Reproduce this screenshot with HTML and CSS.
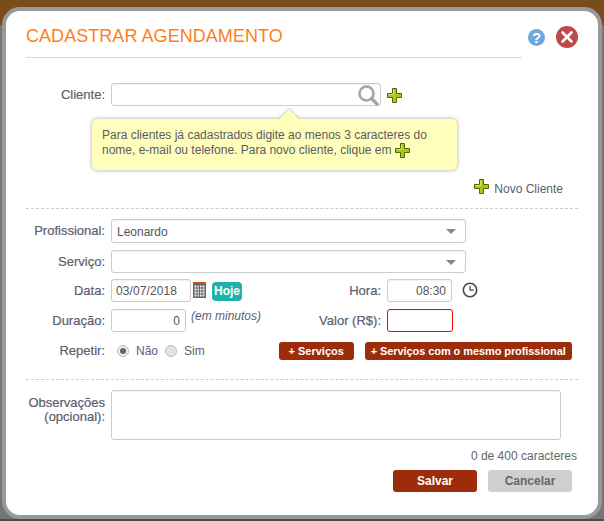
FILE: index.html
```html
<!DOCTYPE html>
<html lang="pt-BR">
<head>
<meta charset="utf-8">
<title>Cadastrar Agendamento</title>
<link rel="stylesheet" href="styles.css">
</head>
<body>
<svg class="defs" width="0" height="0" aria-hidden="true">
  <defs>
    <symbol id="plus" viewBox="0 0 15 15">
      <path d="M5.5 .5h4v5h5v4h-5v5h-4v-5h-5v-4h5z" fill="#a8c81e" stroke="#4c6a06" stroke-width="1"/>
      <path d="M6.500 2v4.500h-4.500" fill="none" stroke="#dcec70" stroke-width="1"/>
    </symbol>
  </defs>
</svg>
<main class="modal">
  <header class="head">
    <h1 class="title">CADASTRAR AGENDAMENTO</h1>
    <div class="head-icons">
      <svg class="help" width="17" height="17" viewBox="0 0 17 17"><circle cx="8.500" cy="8.500" r="8.500" fill="#6fa8dc"/><text x="8.500" y="13.500" text-anchor="middle" class="help-q">?</text></svg>
      <svg class="close" width="22" height="22" viewBox="0 0 22 22"><circle cx="11" cy="11" r="11" fill="#bd4a4a"/><path d="M6.500 6.500l9 9M15.500 6.500l-9 9" stroke="#fff" stroke-width="2.600" stroke-linecap="round"/></svg>
    </div>
  </header>

  <section class="client">
    <div class="row">
      <label class="lbl">Cliente:</label>
      <div class="field field-client">
        <svg class="search" width="23" height="22" viewBox="0 0 23 22"><circle cx="9.500" cy="9.500" r="7" fill="none" stroke="#a6a6a6" stroke-width="2.600"/><path d="M14.500 14.500l5.500 5.500" stroke="#a6a6a6" stroke-width="3.400" stroke-linecap="round"/></svg>
      </div>
      <svg class="plus plus-client" width="15" height="15"><use href="#plus"/></svg>
    </div>
    <div class="tip">
      Para clientes já cadastrados digite ao menos 3 caracteres do<br>
      nome, e-mail ou telefone. Para novo cliente, clique em <svg class="plus plus-inline" width="15" height="15"><use href="#plus"/></svg>
    </div>
    <div class="new-client">
      <svg class="plus plus-new" width="15" height="15"><use href="#plus"/></svg>
      <span>Novo Cliente</span>
    </div>
  </section>

  <section class="details">
    <div class="row row-select">
      <label class="lbl">Profissional:</label>
      <div class="field select">Leonardo<i class="caret"></i></div>
    </div>
    <div class="row row-select2">
      <label class="lbl">Serviço:</label>
      <div class="field select"><i class="caret"></i></div>
    </div>
    <div class="row row-data">
      <label class="lbl">Data:</label>
      <div class="field date">03/07/2018</div>
      <svg class="cal" width="13" height="16" viewBox="0 0 13 16">
        <rect width="13" height="2" fill="#c8501e"/>
        <rect y="2" width="13" height="14" fill="#666"/>
        <path d="M1.500 3.500h10v11h-10z" fill="#f2f2f2"/>
        <path d="M4 3v12M6.500 3v12M9 3v12M1 6h11M1 9h11M1 12h11" stroke="#666" stroke-width="1"/>
      </svg>
      <button class="today" type="button">Hoje</button>
      <label class="lbl lbl-right">Hora:</label>
      <div class="field time">08:30</div>
      <svg class="clock" width="16" height="16" viewBox="0 0 16 16"><circle cx="8" cy="8" r="6.700" fill="none" stroke="#444" stroke-width="1.600"/><path d="M8 3.800v4.400h3.800" fill="none" stroke="#444" stroke-width="1.200"/></svg>
    </div>
    <div class="row row-dur">
      <label class="lbl">Duração:</label>
      <div class="field dur">0</div>
      <em class="hint">(em minutos)</em>
      <label class="lbl lbl-value">Valor (R$):</label>
      <div class="field value"></div>
    </div>
    <div class="row row-repeat">
      <label class="lbl">Repetir:</label>
      <span class="radio on"></span><span class="radio-text">Não</span>
      <span class="radio"></span><span class="radio-text">Sim</span>
      <button class="btn-small btn-a" type="button">+ Serviços</button>
      <button class="btn-small btn-b" type="button">+ Serviços com o mesmo profissional</button>
    </div>
  </section>

  <section class="notes">
    <div class="row row-notes">
      <label class="lbl lbl-notes">Observações<br>(opcional):</label>
      <div class="field textarea"></div>
    </div>
    <div class="count">0 de 400 caracteres</div>
    <div class="actions">
      <button class="btn btn-save" type="button">Salvar</button>
      <button class="btn btn-cancel" type="button">Cancelar</button>
    </div>
  </section>
</main>
</body>
</html>
```
FILE: styles.css
```css
* { box-sizing: border-box; }
html { background: #4c4c4c; }
html, body { margin: 0; }
body {
  width: 604px;
  height: 521px;
  padding: 7px 2px 2px;
  overflow: hidden;
  background: linear-gradient(#7a4c1b 0 25px, #757575 25px 519px, #4c4c4c 519px) no-repeat;
  font-family: "Liberation Sans", Arial, sans-serif;
  font-size: 12px;
  color: #5a6070;
}
.defs { position: absolute; }
.modal {
  width: 600px;
  height: 512px;
  background: #fff;
  border: 4px solid #999;
  border-radius: 18px;
  padding: 0 20px;
}
.head {
  display: flex;
  justify-content: space-between;
  width: 496px;
  height: 47px;
  border-bottom: 1px solid #f6d4ac;
  position: relative;
}
.title {
  margin: 15px 0 0;
  font-size: 18px;
  line-height: 20px;
  font-weight: 400;
  letter-spacing: .05px;
  color: #ff7f17;
}
.head-icons {
  position: absolute;
  left: 502px;
  top: 15px;
  width: 50px;
  display: flex;
  align-items: center;
  gap: 11px;
}
.help-q { font: 700 15px "Liberation Sans", Arial, sans-serif; fill: #fff; }

.row { display: flex; align-items: flex-start; }
.lbl {
  flex: none;
  width: 79px;
  text-align: right;
  font-size: 13px;
  line-height: 16px;
  padding-top: 4px;
  color: #59606e;
  -webkit-text-stroke: .2px #59606e;
}
.field {
  flex: none;
  margin-left: 6px;
  height: 23px;
  background: #fff;
  border: 1px solid #ccc;
  border-radius: 3px;
  box-shadow: inset 0 1px 1px rgba(0,0,0,.06);
  font-size: 12px;
  line-height: 23px;
  padding: 0 5px;
  color: #555;
  position: relative;
}

.client { height: 151px; padding-top: 25px; border-bottom: 1px dashed #ccc; width: 552px; }
.field-client { width: 270px; }
.search { position: absolute; right: 0; top: 0; }
.plus { display: inline-block; }
.plus-client { margin: 5px 0 0 6px; }
.tip {
  position: relative;
  width: 365px;
  height: 51px;
  margin: 13px 0 0 66px;
  padding: 9px 10px 0;
  background: #ffffbb;
  border-radius: 5px;
  box-shadow: 0 0 4px rgba(0,0,0,.35);
  font-size: 12px;
  line-height: 15px;
  color: #5a5a64;
}
.tip::before {
  content: "";
  position: absolute;
  left: 190px;
  top: -7px;
  width: 14px;
  height: 14px;
  background: #ffffbb;
  box-shadow: -1px -1px 2px rgba(0,0,0,.2);
  transform: rotate(45deg);
}
.plus-inline { vertical-align: -4px; }
.new-client {
  display: flex;
  justify-content: flex-end;
  align-items: flex-start;
  gap: 5px;
  margin: 9px 15px 0 0;
  font-size: 12px;
  line-height: 14px;
}
.new-client span { margin-top: 3px; }

.details { width: 552px; height: 171px; padding-top: 10px; border-bottom: 1px dashed #ccc; }
.select { width: 355px; height: 24px; line-height: 24px; }
.caret {
  position: absolute;
  right: 9px;
  top: 9px;
  width: 0;
  height: 0;
  border: 5px solid transparent;
  border-top: 5px solid #888;
  border-bottom: 0;
}
.row-select2 { margin-top: 7px; }
.row-select2 .select { height: 23px; }
.row-data { margin-top: 6px; }
.date { width: 80px; padding: 0 4px; letter-spacing: .1px; }
.cal { margin: 3px 0 0 2px; flex: none; }
.today {
  flex: none;
  margin: 3px 0 0 6px;
  width: 30px;
  height: 19px;
  padding: 0;
  border: 0;
  border-radius: 4px;
  background: #20b2aa;
  color: #fff;
  font: 700 12px/19px "Liberation Sans", Arial, sans-serif;
}
.lbl-right { width: 139px; }
.time { width: 65px; text-align: right; }
.clock { margin: 3px 0 0 10px; flex: none; }
.row-dur { margin-top: 7px; }
.dur { width: 75px; text-align: right; }
.hint { margin: 0 0 0 5px; width: 69px; flex: none; line-height: 14px; font-size: 12px; white-space: nowrap; }
.lbl-value { width: 121px; margin-left: 0; }
.value { width: 66px; border-color: #f00; }
.row-repeat { margin-top: 9px; height: 20px; }
.row-repeat .lbl { padding-top: 2px; }
.radio {
  flex: none;
  width: 12px;
  height: 12px;
  margin: 4px 0 0 12px;
  border-radius: 50%;
  background: #e4e4e4;
  border: 1px solid #bbb;
  position: relative;
}
.radio + .radio-text + .radio { margin-left: 7px; }
.radio.on { background: #eee; }
.radio.on::after {
  content: "";
  position: absolute;
  left: 2px;
  top: 2px;
  width: 6px;
  height: 6px;
  border-radius: 50%;
  background: #666;
}
.radio-text { flex: none; margin-left: 7px; line-height: 20px; font-size: 12px; }
.btn-small {
  flex: none;
  height: 18px;
  padding: 0;
  border: 0;
  border-radius: 3px;
  background: #9c2c0a;
  color: #fff;
  font: 700 11px/18px "Liberation Sans", Arial, sans-serif;
}
.btn-a { width: 75px; margin-left: 74px; margin-top: 1px; }
.btn-b { width: 207px; margin-left: 11px; margin-top: 1px; letter-spacing: -.08px; }

.notes { width: 552px; padding-top: 10px; }
.row-notes { align-items: flex-start; }
.lbl-notes { line-height: 14px; padding-top: 6px; }
.textarea { width: 450px; height: 50px; }
.count { margin: 8px 1px 0 0; padding-top: 1px; text-align: right; line-height: 14px; font-size: 12px; color: #666; }
.actions { display: flex; justify-content: flex-end; gap: 11px; margin: 7px 6px 0 0; }
.btn {
  width: 84px;
  height: 22px;
  border: 0;
  border-radius: 3px;
  padding: 0;
  font: 700 12px/22px "Liberation Sans", Arial, sans-serif;
}
.btn-save { background: #9c2c0a; color: #fff; }
.btn-cancel { background: #cfcfcf; color: #666; }
```
